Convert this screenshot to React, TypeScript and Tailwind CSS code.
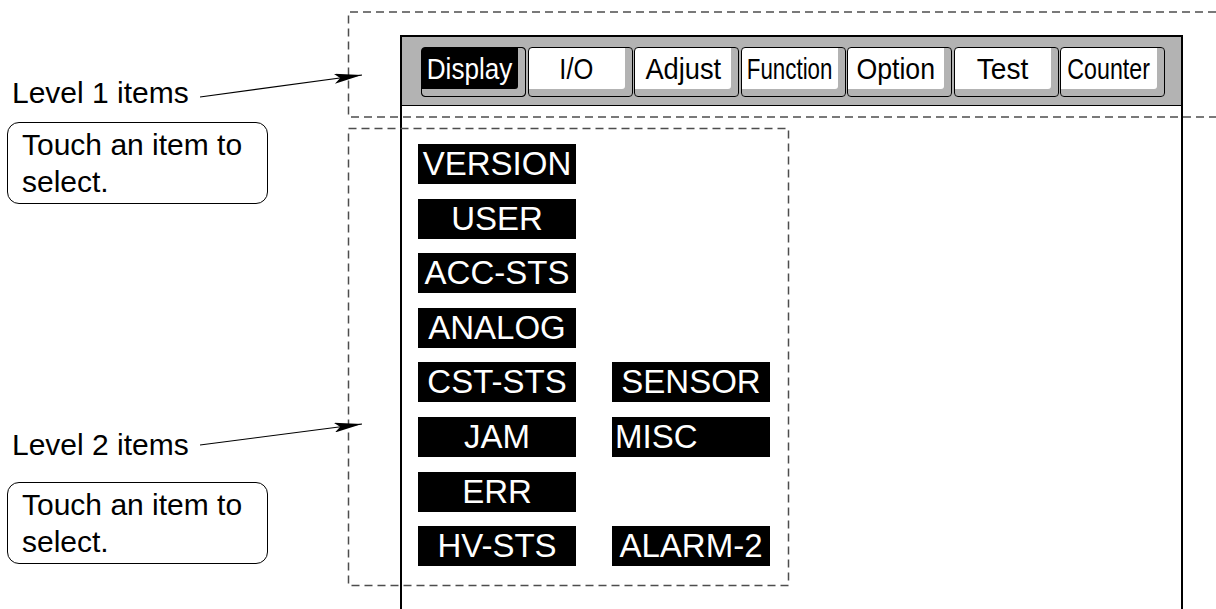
const tabs = [
  { label: "Display", active: true, fit: "scale-x-[0.9]" },
  { label: "I/O", active: false, fit: "scale-x-[0.88]" },
  { label: "Adjust", active: false, fit: "scale-x-[0.94]" },
  { label: "Function", active: false, fit: "scale-x-[0.77]" },
  { label: "Option", active: false, fit: "scale-x-[0.92]" },
  { label: "Test", active: false, fit: "scale-x-[0.97]" },
  { label: "Counter", active: false, fit: "scale-x-[0.8]" },
];

// level 2 grid, row by row; null = empty cell
const items: (string | null)[][] = [
  ["VERSION", null],
  ["USER", null],
  ["ACC-STS", null],
  ["ANALOG", null],
  ["CST-STS", "SENSOR"],
  ["JAM", "MISC"],
  ["ERR", null],
  ["HV-STS", "ALARM-2"],
];

const Note = () => (
  <div className="w-[261px] h-[82px] rounded-[12px] border border-black pl-[14px] pt-[3px] text-[30px] leading-[37px]">
    Touch an item to
    <br />
    select.
  </div>
);

const Tab = ({ label, active, fit }: { label: string; active: boolean; fit: string }) => (
  <div
    className={`w-[105px] h-[50px] rounded-[4px] border border-black flex items-center justify-center pr-[7px] pb-[6px] shadow-[inset_-7px_-7px_0_#b3b3b3] ${
      active ? "bg-black text-white" : "bg-white text-black"
    }`}
  >
    <span className={`inline-block text-[29px] leading-[30px] ${fit}`}>{label}</span>
  </div>
);

const Item = ({ label, left }: { label: string; left?: boolean }) => (
  <div
    className={`w-[158px] h-[40px] bg-black text-white text-[33px] leading-[40px] flex items-center ${
      left ? "justify-start pl-[3px]" : "justify-center"
    }`}
  >
    {label}
  </div>
);

export default function App() {
  return (
    <div className="relative w-[1216px] h-[609px] overflow-hidden bg-white text-black font-['Liberation_Sans',Arial,sans-serif]">
      <div className="flex h-full">
        {/* annotations on the left */}
        <div className="w-[400px] pl-[7px] flex flex-col">
          <div className="mt-[78px] pl-[5px] text-[30px] leading-[30px]">Level 1 items</div>
          <div className="mt-[14px]">
            <Note />
          </div>
          <div className="mt-[226px] pl-[5px] text-[30px] leading-[30px]">Level 2 items</div>
          <div className="mt-[22px]">
            <Note />
          </div>
        </div>

        {/* the touch screen */}
        <div className="mt-[35px] w-[783px] border-x-2 border-t-2 border-black flex flex-col">
          <div className="h-[69px] bg-[#b3b3b3] border-b border-black pl-[19px] pt-[10px]">
            <div className="w-[744px] flex justify-between">
              {tabs.map((t) => (
                <Tab key={t.label} {...t} />
              ))}
            </div>
          </div>
          <div className="pl-[16px] pt-[38px] grid grid-cols-[158px_158px] gap-x-[36px] gap-y-[14.6px]">
            {items.map((row, i) =>
              row.map((cell, j) =>
                cell ? <Item key={`${i}-${j}`} label={cell} left={cell === "MISC"} /> : <div key={`${i}-${j}`} />
              )
            )}
          </div>
        </div>
      </div>

      {/* dashed frames and leader arrows */}
      <svg className="absolute inset-0 pointer-events-none" width="1216" height="609" viewBox="0 0 1216 609">
        <defs>
          <marker id="head" markerWidth="28" markerHeight="10" refX="28" refY="5" orient="auto" markerUnits="userSpaceOnUse">
            <path d="M0 0 L28 5 L0 10 L6 5 Z" fill="#000" />
          </marker>
        </defs>
        <g fill="none" stroke="#4d4d4d" strokeWidth="1.5" strokeDasharray="8 5">
          <path d="M1216 12 H348.5 V117 H1216" />
          <rect x="348.5" y="128.5" width="440" height="457" />
        </g>
        <line x1="200" y1="97" x2="362" y2="75" stroke="#000" strokeWidth="1.2" markerEnd="url(#head)" />
        <line x1="200" y1="445" x2="362" y2="424" stroke="#000" strokeWidth="1.2" markerEnd="url(#head)" />
      </svg>
    </div>
  );
}
